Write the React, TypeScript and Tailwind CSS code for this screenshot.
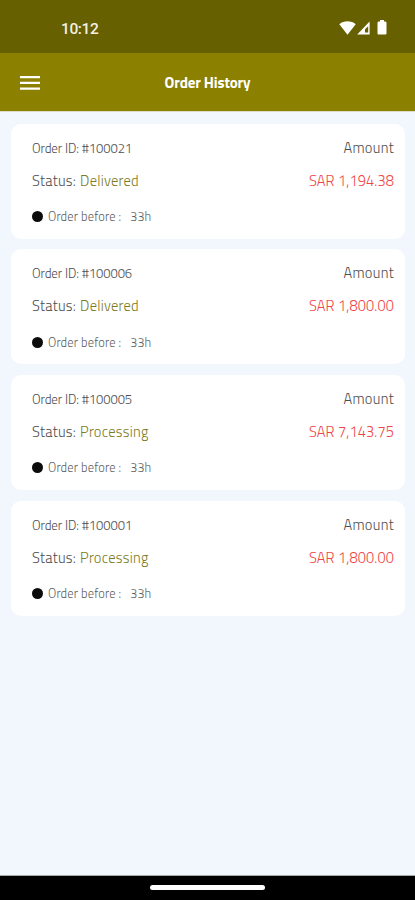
interface IOrder {
  id: string
  status: string
  amount: string
  orderBefore: string
}

const orders: IOrder[] = [
  { id: "#100021", status: "Delivered", amount: "SAR 1,194.38", orderBefore: "33h" },
  { id: "#100006", status: "Delivered", amount: "SAR 1,800.00", orderBefore: "33h" },
  { id: "#100005", status: "Processing", amount: "SAR 7,143.75", orderBefore: "33h" },
  { id: "#100001", status: "Processing", amount: "SAR 1,800.00", orderBefore: "33h" },
]

function StatusBar() {
  return (
    <div className="flex h-[53px] items-center justify-between bg-[#676000] pt-1 pr-[28px] pl-[61px] text-[#f3f0e4]">
      <span className="font-['Roboto',sans-serif] text-[15.5px] leading-5 font-medium tracking-[-0.4px]">10:12</span>
      <div className="flex items-center pb-[2px]">
        <svg width="17" height="14" viewBox="0 0 17 14" fill="#fff">
          <path d="M0.3 3.2C5 -0.6 12 -0.6 16.7 3.2L8.5 13.8Z" />
        </svg>
        <svg className="ml-px" width="13" height="14" viewBox="0 0 13 14">
          <path d="M12.6 0.6V13.4H0.2Z" fill="#fff" />
          <path d="M11.2 5.2V11.6H8V8.2Z" fill="#676000" />
        </svg>
        <svg className="ml-[7px]" width="10" height="15" viewBox="0 0 10 15" fill="#fff">
          <path d="M3 0H7V1.5H8.5Q9.5 1.5 9.5 3V13.5Q9.5 14.5 8.5 14.5H1.5Q0.5 14.5 0.5 13.5V3Q0.5 1.5 1.5 1.5H3Z" />
        </svg>
      </div>
    </div>
  )
}

function Header() {
  return (
    <header className="grid h-[58px] grid-cols-[60px_1fr_60px] items-center bg-[#8b8000] text-white">
      <button className="pt-px pl-5" aria-label="Menu">
        <svg width="20" height="14" viewBox="0 0 20 14" fill="#fff">
          <path d="M0 0H20V2.2H0ZM0 5.8H20V8H0ZM0 11.6H20V13.8H0Z" />
        </svg>
      </button>
      <h1 className="pt-[2px] text-center text-[15px] leading-5 font-bold tracking-[-0.15px]">Order History</h1>
    </header>
  )
}

function OrderCard({ order }: { order: IOrder }) {
  return (
    <div className="flex h-[115px] justify-between rounded-[10px] bg-white pr-[11px] pl-[21px] text-[#4d4d4d]">
      <div className="flex flex-col">
        <p className="mt-[14px] text-[13px] leading-5 tracking-[-0.08px]">Order ID: {order.id}</p>
        <p className="mt-[13px] text-[14.5px] leading-5 tracking-[0.25px]">
          Status: <span className="ml-[0.5px] text-[#7c7a1c]">{order.status}</span>
        </p>
        <div className="mt-[16.4px] flex items-center text-[12.5px] leading-5 tracking-[0.15px] text-[#606060]">
          <span className="mr-[5px] mb-px size-[11px] rounded-full bg-[#0c0c0c]" />
          <span>Order before :</span>
          <span className="ml-[9px]">{order.orderBefore}</span>
        </div>
      </div>
      <div className="flex flex-col text-right text-[14.5px] leading-5 tracking-[0.15px]">
        <p className="mt-[14px] tracking-[0.3px]">Amount</p>
        <p className="mt-[13px] text-[#f04444]">{order.amount}</p>
      </div>
    </div>
  )
}

export default function App() {
  return (
    <div className="flex h-[900px] w-[415px] flex-col overflow-hidden bg-[#f2f6fd] font-['Titillium_Web','Roboto',sans-serif]">
      <StatusBar />
      <Header />
      <main className="flex flex-1 flex-col gap-[10.8px] border-t border-[#dcdcc8] pt-[11.5px] pr-[10px] pl-[11px] font-light">
        {orders.map((order) => (
          <OrderCard key={order.id} order={order} />
        ))}
      </main>
      <div className="flex h-[25px] items-center justify-center border-t border-[#a3aaa8] bg-black pb-[2px]">
        <div className="h-[5px] w-[115px] rounded-full bg-white" />
      </div>
    </div>
  )
}
